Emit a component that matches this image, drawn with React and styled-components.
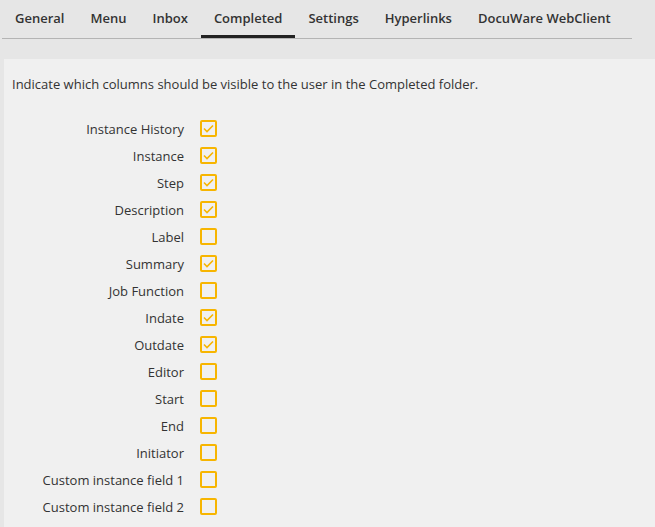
import React from "react";
import styled, { createGlobalStyle } from "styled-components";

const G = createGlobalStyle`
  body { margin:0; background:#e6e6e6; font-family:"Open Sans", sans-serif; color:#333; }
`;
const Tabs = styled.div`display:flex; margin-left:2px; width:630px; height:39px; border-bottom:1px solid #b4b4b4; box-sizing:border-box;`;
const Tab = styled.div`
  padding:0 13px; height:38px; line-height:36px; font-size:13px; font-weight:600; color:#333;
  box-sizing:border-box; border-bottom:3px solid ${p => p.$active ? "#222" : "transparent"};
`;
const Panel = styled.div`margin:20px 0 0 4px; background:#f0f0f0; padding:16px 8px 12px; height:468px; box-sizing:border-box;`;
const Intro = styled.div`font-size:13px; margin-bottom:22px;`;
const Row = styled.label`display:grid; grid-template-columns:172px 17px; column-gap:16px; align-items:center; height:27px;`;
const Label = styled.span`font-size:13px; text-align:right;`;
const Box = styled.span`
  width:17px; height:17px; box-sizing:border-box; border:2px solid #f7b500; border-radius:2px;
  display:flex; align-items:center; justify-content:center;
`;
const tabs = ["General","Menu","Inbox","Completed","Settings","Hyperlinks","DocuWare WebClient"];
const rows = [["Instance History",1],["Instance",1],["Step",1],["Description",1],["Label",0],["Summary",1],["Job Function",0],["Indate",1],["Outdate",1],["Editor",0],["Start",0],["End",0],["Initiator",0],["Custom instance field 1",0],["Custom instance field 2",0]];
export default function App(){
  return <>
    <G/>
    <Tabs>{tabs.map(t => <Tab key={t} $active={t==="Completed"}>{t}</Tab>)}</Tabs>
    <Panel>
      <Intro>Indicate which columns should be visible to the user in the Completed folder.</Intro>
      {rows.map(([l,c]) => <Row key={l}><Label>{l}</Label><Box>{c ? <svg width="11" height="9" viewBox="0 0 11 9"><path d="M1 4.5 L4 7.5 L10 1.5" fill="none" stroke="#f7b500" strokeWidth="1.6"/></svg> : null}</Box></Row>)}
    </Panel>
  </>;
}
